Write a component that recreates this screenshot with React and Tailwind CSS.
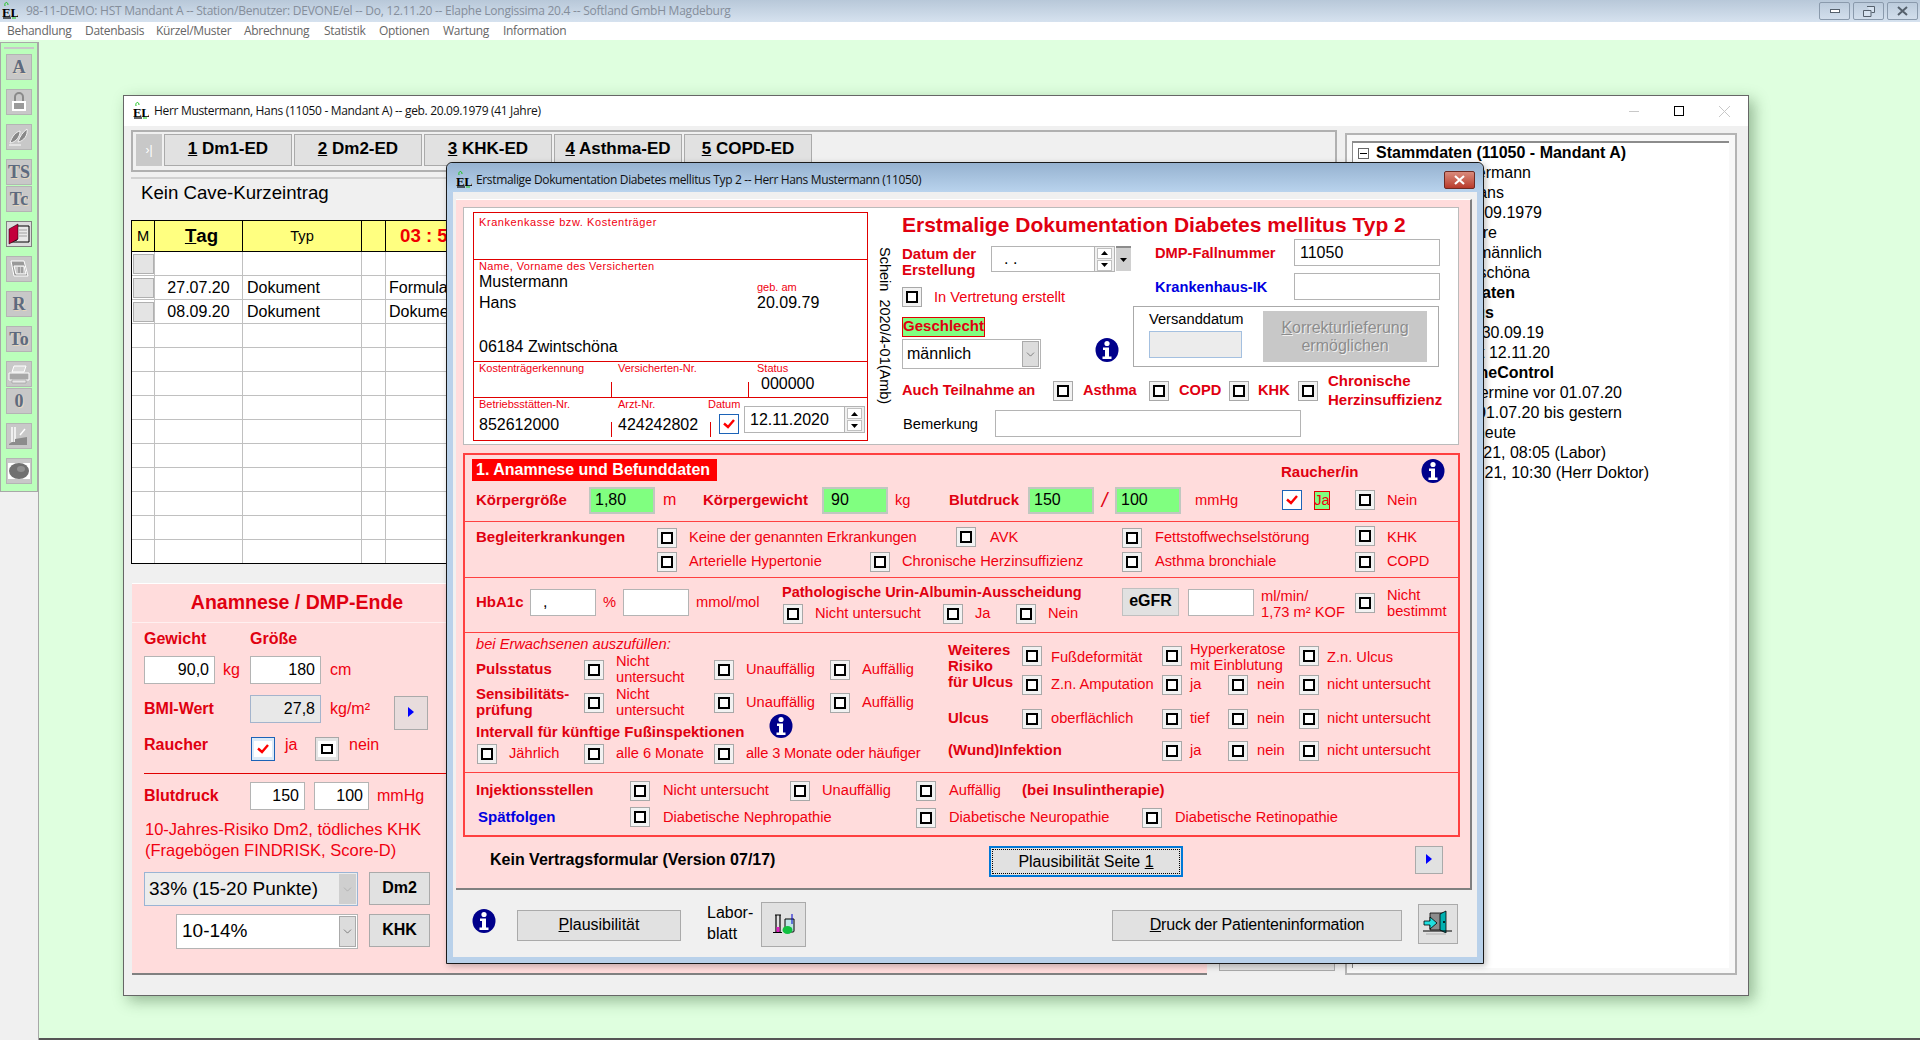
import React from "react";
import { ChevronDown } from "lucide-react";

const Logo = () => (
  <svg width="16" height="20" viewBox="0 0 16 20" className="shrink-0">
    <path d="M3 5 C2 1 6 0 6 4" fill="none" stroke="#19c419" strokeWidth="1" />
    <text x="0" y="15.5" fontSize="13" fontWeight="700" fontFamily="Liberation Serif" fill="#000">EL</text>
    <path d="M1 17H9" stroke="#000" strokeWidth="1.2" />
    <path d="M10 17H14" stroke="#19c419" strokeWidth="1" />
  </svg>
);

const Info = ({ className = "" }) => (
  <svg width="24" height="24" viewBox="0 0 24 24" className={`shrink-0 ${className}`}>
    <ellipse cx="12" cy="12" rx="11.5" ry="12" fill="#00008b" />
    <circle cx="12" cy="5.5" r="2.6" fill="#fff" />
    <path d="M8 9.5h6v9h2.5v2.5h-9v-2.5H10v-6.5H8z" fill="#fff" />
  </svg>
);

const Arrow = () => (
  <svg width="8" height="12" viewBox="0 0 8 12">
    <path d="M1 1l6 5-6 5z" fill="#0000ff" />
  </svg>
);

const Check = () => (
  <svg width="14" height="12" viewBox="0 0 14 12">
    <path d="M2 5.5l4 3.5 6-7" fill="none" stroke="#ff0000" strokeWidth="2.4" />
  </svg>
);

// the small framed box with the black square, used everywhere in the form
const Cb = ({ checked }) =>
  checked ? (
    <span className="flex h-5 w-5 shrink-0 items-center justify-center border border-[#1c63b7] bg-white">
      <Check />
    </span>
  ) : (
    <span className="flex h-5 w-5 shrink-0 items-center justify-center border border-[#a8a8a8] bg-[#f2f2f2]">
      <span className="h-3 w-3 border-2 border-black bg-white" />
    </span>
  );

const Opt = ({ className = "", gap = "gap-3", cb = "", checked, children }) => (
  <div className={`flex shrink-0 items-center ${gap} ${className}`}>
    <span className={`flex shrink-0 ${cb}`}>
      <Cb checked={checked} />
    </span>
    <span className="lbl whitespace-nowrap text-[14.67px] leading-4 text-[#f00010]">{children}</span>
  </div>
);

const B = ({ className = "", color = "text-[#e00010]", size = "text-[15px]", children }) => (
  <span className={`lbl shrink-0 whitespace-nowrap font-bold leading-4 ${size} ${color} ${className}`}>{children}</span>
);

const T = ({ className = "", children }) => (
  <span className={`lbl shrink-0 whitespace-nowrap text-[14.67px] leading-4 text-[#f00010] ${className}`}>{children}</span>
);

const Field = ({ className = "", children }) => (
  <div className={`flex shrink-0 items-center border border-[#b4b4b4] bg-white text-[16px] text-black ${className}`}>{children}</div>
);

const GreenField = ({ className = "", children }) => (
  <div className={`flex h-[27px] w-[66px] shrink-0 items-center border-2 border-[#c0c8c0] bg-[#80ff80] text-[16px] text-black ${className}`}>{children}</div>
);

const Btn = ({ className = "", children }) => (
  <div className={`flex shrink-0 items-center justify-center border border-[#aaaaaa] bg-[#e1e1e1] pb-[2px] text-black ${className}`}>{children}</div>
);

const Spin = () => (
  <div className="flex h-full w-[20px] shrink-0 flex-col items-center justify-center gap-px border-l border-[#b4b4b4] bg-[#f0f0f0]">
    <span className="flex h-[11px] w-[15px] items-center justify-center border border-[#c0c0c0] bg-white">
      <svg width="7" height="4" viewBox="0 0 7 4"><path d="M3.5 0L7 4H0z" fill="#000" /></svg>
    </span>
    <span className="flex h-[11px] w-[15px] items-center justify-center border border-[#c0c0c0] bg-white">
      <svg width="7" height="4" viewBox="0 0 7 4"><path d="M0 0h7L3.5 4z" fill="#000" /></svg>
    </span>
  </div>
);

const Caret = ({ className = "" }) => (
  <span className={`flex shrink-0 items-center justify-center border border-[#aaaaaa] bg-[#dcdcdc] ${className}`}>
    <ChevronDown size={13} strokeWidth={1} color="#333" />
  </span>
);

const Tick = ({ className = "" }) => <span className={`h-[15px] w-px shrink-0 bg-[#e00000] ${className}`} />;

const Small = ({ className = "", children }) => (
  <div className={`h-[14px] shrink-0 whitespace-nowrap text-[11px] leading-[12px] text-[#f00010] ${className}`}>{children}</div>
);

const ToolBtn = ({ children, active }) => (
  <div
    className={`flex h-[26px] w-[26px] items-center justify-center border font-['Liberation_Serif',serif] text-[18px] font-bold text-[#5d6a80] [text-shadow:1px_1px_0_#e6d6bc] ${
      active ? "border-[#808080] bg-[#dcdcdc]" : "border-[#b4b4b4] bg-[#c8c8c8]"
    }`}
  >
    {children}
  </div>
);

const tabs = [
  ["1", " Dm1-ED"],
  ["2", " Dm2-ED"],
  ["3", " KHK-ED"],
  ["4", " Asthma-ED"],
  ["5", " COPD-ED"],
];

const rows = [
  { box: true },
  { box: true, tag: "27.07.20", typ: "Dokument", rest: "Formular" },
  { box: true, tag: "08.09.20", typ: "Dokument", rest: "Dokument" },
  {}, {}, {}, {}, {}, {}, {}, {}, {}, {},
];

// right edge of each tree line is what shows beside the dialog
const tree = [
  { w: "w-[178px]", text: "Name: Mustermann" },
  { w: "w-[151px]", text: "Vorname: Hans" },
  { w: "w-[189px]", text: "geb. 20.09.1979" },
  { w: "w-[144px]", text: "41 Jahre" },
  { w: "w-[189px]", text: "Sex: männlich" },
  { w: "w-[177px]", text: "06184 Zwintschöna" },
  { w: "w-[162px]", text: "Scheindaten", bold: true },
  { w: "w-[141px]", text: "Status", bold: true },
  { w: "w-[191px]", text: "DMP 30.09.19" },
  { w: "w-[197px]", text: "zuletzt 12.11.20" },
  { w: "w-[201px]", text: "OnlineControl", bold: true },
  { w: "w-[269px]", text: "Termine vor 01.07.20" },
  { w: "w-[269px]", text: "ab 01.07.20 bis gestern" },
  { w: "w-[163px]", text: "heute" },
  { w: "w-[253px]", text: "01.21, 08:05 (Labor)" },
  { w: "w-[296px]", text: "01.21, 10:30 (Herr Doktor)" },
];

const MainWindow = () => (
  <div className="absolute left-[123px] top-[55px] h-[901px] w-[1626px] border border-[#666666] bg-[#f0f0f0] shadow-[5px_5px_14px_rgba(40,80,40,0.4)]">
    <div className="flex h-[30px] items-center bg-white pl-[9px] pr-[18px] font-['Open_Sans',sans-serif] text-[12px] tracking-[-0.32px] text-[#111]">
      <Logo />
      <span className="ml-[5px]">Herr Mustermann, Hans (11050 - Mandant A) -- geb. 20.09.1979 (41 Jahre)</span>
      <div className="ml-auto flex items-center gap-[35px]">
        <span className="h-px w-[10px] bg-[#c8c8c8]" />
        <span className="h-[10px] w-[10px] border border-black" />
        <svg width="11" height="11" viewBox="0 0 11 11"><path d="M0 0l11 11M11 0L0 11" stroke="#c8c8c8" /></svg>
      </div>
    </div>

    <div className="flex h-[869px] pl-[7px]">
      <div className="w-[1206px] shrink-0">
        <div className="mt-[4px] flex h-[42px] items-start gap-[2px] border-2 border-[#b0b0b0] pl-[3px] pt-[2px]">
          <div className="flex h-[32px] w-[26px] items-center justify-center bg-[#c8c8c8] text-[12px] text-white">›|</div>
          {tabs.map(([n, label]) => (
            <Btn key={n} className="h-[32px] w-[128px] text-[17px] font-bold">
              <span className="underline">{n}</span>
              <span className="whitespace-pre">{label}</span>
            </Btn>
          ))}
        </div>
        <div className="mt-[5px] flex h-[43px] items-center border-t-2 border-[#d0d0d0] pb-[14px] pl-[10px] text-[18.67px] text-black">
          Kein Cave-Kurzeintrag
        </div>

        {/* table behind the dialog */}
        <div className="h-[344px] overflow-hidden border border-black bg-white">
          <div className="grid h-[31px] grid-cols-[23px_88px_119px_24px_1fr] border-b border-black bg-[#ffff80] text-center">
            <div className="flex items-center justify-center border-r border-black text-[14.67px]">M</div>
            <div className="flex items-center justify-center border-r border-black pl-[6px] text-[18.67px] font-bold">
              <span className="underline">T</span>ag
            </div>
            <div className="flex items-center justify-center border-r border-black text-[14.67px]">Typ</div>
            <div className="border-r border-black" />
            <div className="flex items-center pl-[14px] text-[18.67px] font-bold text-[#f00000]">03 : 58</div>
          </div>
          {rows.map((r, i) => (
            <div key={i} className="grid h-[24px] grid-cols-[23px_88px_119px_24px_1fr] border-b border-[#c0c0c0] text-[16px] text-black">
              <div className="flex items-center border-r border-[#c0c0c0] pl-px">
                {r.box && <span className="h-[20px] w-[21px] border border-[#b0b0b0] bg-[#e4e4e4]" />}
              </div>
              <div className="flex items-center justify-center border-r border-[#c0c0c0]">{r.tag}</div>
              <div className="flex items-center border-r border-[#c0c0c0] pl-[4px]">{r.typ}</div>
              <div className="border-r border-[#c0c0c0]" />
              <div className="flex items-center pl-[3px]">{r.rest}</div>
            </div>
          ))}
        </div>

        <div className="ml-px mt-[19px] flex">
          <div className="h-[392px] w-[1075px] shrink-0 border-b-2 border-t border-b-[#808080] border-t-white bg-[#ffdcdc] pl-[12px]">
            <div className="-ml-[12px] flex h-[39px] w-[1075px] items-center border-b border-[#fff0f0]">
              <div className="w-[330px] text-center text-[19.5px] font-bold text-[#e00010]">Anamnese / DMP-Ende</div>
            </div>
            <div className="mt-[8px] flex h-[16px] text-[16px] font-bold leading-4 text-[#e00010]">
              <span className="w-[106px]">Gewicht</span>
              <span>Größe</span>
            </div>
            <div className="mt-[9px] flex items-center text-[16px] text-[#f00010]">
              <Field className="h-[28px] w-[71px] justify-end pr-[5px]">90,0</Field>
              <span className="ml-[8px] w-[27px]">kg</span>
              <Field className="h-[28px] w-[71px] justify-end pr-[5px]">180</Field>
              <span className="ml-[9px]">cm</span>
            </div>
            <div className="mt-[11px] flex items-start text-[16px] text-[#f00010]">
              <span className="mt-[2px] w-[106px] font-bold text-[#e00010]">BMI-Wert</span>
              <div className="flex h-[28px] w-[71px] items-center justify-end border border-[#a4b4cc] bg-[#e8e8e8] pr-[5px] text-black">27,8</div>
              <span className="ml-[9px] mt-[2px] w-[64px]">kg/m²</span>
              <Btn className="mt-px h-[34px] w-[34px] bg-[#e8dcdc]"><Arrow /></Btn>
            </div>
            <div className="mt-[7px] flex h-[24px] items-center text-[16px] leading-4 text-[#f00010]">
              <span className="mb-[8px] w-[107px] font-bold text-[#e00010]">Raucher</span>
              <span className="flex h-[24px] w-[24px] items-center justify-center border border-[#1c63b7] bg-[#dcebf8]">
                <span className="flex h-[16px] w-[18px] items-center justify-center bg-white"><Check /></span>
              </span>
              <span className="mb-[8px] ml-[10px] w-[30px]">ja</span>
              <span className="flex h-[24px] w-[24px] items-center justify-center border border-[#a8a8a8] bg-[#e4e4e4]">
                <span className="flex h-[16px] w-[18px] items-center justify-center bg-white">
                  <span className="h-[10px] w-[12px] border-2 border-black" />
                </span>
              </span>
              <span className="mb-[8px] ml-[10px]">nein</span>
            </div>
            <div className="mt-[12px] h-px bg-[#e00000]" />
            <div className="mt-[8px] flex items-center text-[16px] text-[#f00010]">
              <span className="w-[106px] font-bold text-[#e00010]">Blutdruck</span>
              <Field className="h-[28px] w-[55px] justify-end pr-[5px]">150</Field>
              <Field className="ml-[9px] h-[28px] w-[55px] justify-end pr-[5px]">100</Field>
              <span className="ml-[8px]">mmHg</span>
            </div>
            <div className="ml-px mt-[9px] text-[16.5px] leading-[21px] text-[#f00010]">
              10-Jahres-Risiko Dm2, tödliches KHK
              <br />
              (Fragebögen FINDRISK, Score-D)
            </div>
            <div className="mt-[11px] flex items-start">
              <div className="flex h-[34px] w-[214px] items-center border border-[#9ab4d4] bg-[#ececec] pl-[4px] text-[19px] text-black">
                33% (15-20 Punkte)
                <span className="ml-auto mr-px flex h-[30px] w-[17px] items-center justify-center bg-[#cfcfcf]">
                  <ChevronDown size={13} strokeWidth={1} color="#999" />
                </span>
              </div>
              <Btn className="ml-[11px] h-[33px] w-[61px] text-[16px] font-bold">Dm2</Btn>
            </div>
            <div className="ml-[32px] mt-[8px] flex items-start">
              <div className="flex h-[35px] w-[182px] items-center border border-[#b4b4b4] bg-white pl-[5px] text-[19px] text-black">
                10-14%
                <Caret className="ml-auto mr-px h-[31px] w-[17px]" />
              </div>
              <Btn className="ml-[11px] h-[33px] w-[61px] text-[16px] font-bold">KHK</Btn>
            </div>
          </div>
          <div className="ml-[12px] mt-auto mb-[4px] h-[30px] w-[116px] border border-[#aaaaaa] bg-[#e1e1e1]" />
        </div>
      </div>

      {/* tree on the right */}
      <div className="ml-[8px] mt-[7px] h-[842px] w-[392px] shrink-0 border-2 border-[#b4b4b4] bg-[#f8f8f8] px-[5px] pt-[6px]">
        <div className="h-[827px] w-[377px] border-t-2 border-l border-[#8c8c8c] bg-white">
          <div className="flex h-[20px] items-center pl-[5px] text-[16px] font-bold text-black">
            <span className="flex h-[11px] w-[11px] shrink-0 items-center justify-center border border-[#666]">
              <span className="h-px w-[7px] bg-black" />
            </span>
            <span className="ml-[7px] whitespace-nowrap">Stammdaten (11050 - Mandant A)</span>
          </div>
          {tree.map((l) => (
            <div key={l.text} className={`flex h-[20px] items-center justify-end whitespace-nowrap text-[16px] text-black ${l.w} ${l.bold ? "font-bold" : ""}`}>
              {l.text}
            </div>
          ))}
        </div>
      </div>
    </div>
  </div>
);

const ScheinBox = () => (
  <div className="h-[229px] w-[395px] shrink-0 border border-[#e00000] text-[16px] leading-4 text-black">
    <div className="h-[47px] border-b border-[#e00000] pl-[5px] pt-[3px]">
      <Small className="tracking-[0.57px]">Krankenkasse bzw. Kostenträger</Small>
    </div>
    <div className="flex h-[102px] border-b border-[#e00000] pl-[5px]">
      <div className="w-[278px] shrink-0">
        <Small className="tracking-[0.37px]">Name, Vorname des Versicherten</Small>
        <div>Mustermann</div>
        <div className="mt-[5px]">Hans</div>
        <div className="mt-[28px]">06184 Zwintschöna</div>
      </div>
      <div className="pt-[21px]">
        <Small>geb. am</Small>
        <div>20.09.79</div>
      </div>
    </div>
    <div className="flex h-[36px] border-b border-[#e00000] pl-[5px]">
      <div className="w-[139px] shrink-0">
        <Small>Kostenträgerkennung</Small>
        <Tick className="ml-[132px] mt-[6px] block" />
      </div>
      <div className="w-[139px] shrink-0">
        <Small>Versicherten-Nr.</Small>
        <Tick className="ml-[130px] mt-[6px] block" />
      </div>
      <div>
        <Small>Status</Small>
        <div className="pl-[4px]">000000</div>
      </div>
    </div>
    <div className="pl-[5px]">
      <div className="flex">
        <Small className="w-[139px]">Betriebsstätten-Nr.</Small>
        <Small className="w-[90px]">Arzt-Nr.</Small>
        <Small>Datum</Small>
      </div>
      <div className="flex h-[28px] items-start">
        <span className="mt-[5px] w-[132px] shrink-0">852612000</span>
        <Tick className="mt-[10px]" />
        <span className="ml-[6px] mt-[5px] w-[92px] shrink-0">424242802</span>
        <Tick className="mt-[10px]" />
        <span className="ml-[8px] mt-[2px]"><Cb checked /></span>
        <Field className="-mt-[6px] ml-[5px] h-[27px] w-[121px] pl-[5px]">
          12.11.2020
          <span className="ml-auto flex h-full"><Spin /></span>
        </Field>
      </div>
    </div>
  </div>
);

const FormHead = () => (
  <div className="w-[557px] shrink-0">
    <div className="flex h-[26px] items-center whitespace-nowrap text-[21px] font-bold text-[#e00010]">
      Erstmalige Dokumentation Diabetes mellitus Typ 2
    </div>
    <div className="flex h-[130px]">
      <div className="w-[231px] shrink-0 pt-[8px]">
        <div className="flex items-start">
          <B className="w-[89px]">Datum der<br />Erstellung</B>
          <Field className="h-[26px] w-[124px] pl-[12px] text-[12px]">
            . .
            <span className="ml-auto flex h-full"><Spin /></span>
          </Field>
          <span className="ml-px flex h-[25px] w-[15px] items-center justify-center border-t-2 border-[#8c8c8c] bg-[#d0d0d0]">
            <svg width="7" height="4" viewBox="0 0 7 4"><path d="M0 0h7L3.5 4z" fill="#000" /></svg>
          </span>
        </div>
        <div className="mt-[9px] flex items-center gap-3">
          <Cb />
          <T>In Vertretung erstellt</T>
        </div>
        <div className="mt-[10px] flex h-[20px] w-[83px] items-center justify-center border border-[#e00000] bg-[#80ff80] pb-[2px]">
          <B>Geschlecht</B>
        </div>
        <div className="mt-[2px] flex items-start">
          <Field className="h-[30px] w-[139px] pl-[4px]">
            männlich
            <Caret className="ml-auto mr-px h-[26px] w-[17px]" />
          </Field>
          <Info className="-mt-px ml-[54px]" />
        </div>
      </div>
      <div className="w-[306px] shrink-0 pt-px">
        <div className="flex items-center">
          <B className="w-[161px] pl-[22px]" size="text-[14.67px]">DMP-Fallnummer</B>
          <Field className="h-[27px] w-[146px] pl-[5px]">11050</Field>
        </div>
        <div className="mt-[7px] flex items-center">
          <B className="w-[161px] pl-[22px]" size="text-[14.67px]" color="text-[#0000e0]">Krankenhaus-IK</B>
          <Field className="h-[27px] w-[146px]" />
        </div>
        <div className="mt-[6px] flex h-[61px] w-[306px] border border-[#aaaaaa] pl-[15px] pt-[4px]">
          <div className="w-[114px] shrink-0">
            <div className="h-[16px] text-[14.67px] leading-4 text-black">Versanddatum</div>
            <div className="mt-[4px] h-[27px] w-[93px] border border-[#a4c0e0] bg-[#ececec]" />
          </div>
          <div className="flex h-[51px] w-[164px] flex-col items-center justify-center bg-[#c8c8c8] text-[16px] leading-[18px] text-[#8c8c8c] [text-shadow:1px_1px_0_#f0f0f0]">
            <span><span className="underline">K</span>orrekturlieferung</span>
            <span>ermöglichen</span>
          </div>
        </div>
      </div>
    </div>
    <div className="mt-[4px] flex h-[38px] items-center [&_.lbl]:pb-[2px]">
      <B className="w-[151px]" size="text-[14.67px]">Auch Teilnahme an</B>
      <div className="flex w-[96px] shrink-0 items-center gap-[10px]"><Cb /><B size="text-[14.67px]">Asthma</B></div>
      <div className="flex w-[80px] shrink-0 items-center gap-[10px]"><Cb /><B size="text-[14.67px]">COPD</B></div>
      <div className="flex w-[69px] shrink-0 items-center gap-[9px]"><Cb /><B size="text-[14.67px]">KHK</B></div>
      <div className="flex items-center gap-[10px]">
        <Cb />
        <B className="leading-[19px]">Chronische<br />Herzinsuffizienz</B>
      </div>
    </div>
    <div className="flex items-center">
      <span className="w-[93px] pl-px text-[14.67px] text-black">Bemerkung</span>
      <Field className="h-[27px] w-[306px]" />
    </div>
  </div>
);

const Section = () => (
  <div className="h-[384px] w-[997px] border-2 border-[#ff4040]">
    {/* Raucher + Groesse, Gewicht, Blutdruck */}
    <div className="h-[66px]">
      <div className="flex h-[28px] items-start pl-[7px] pt-[4px]">
        <div className="flex h-[22px] w-[245px] shrink-0 items-center bg-[#ff0000] pl-[4px] text-[16px] font-bold text-white">
          1. Anamnese und Befunddaten
        </div>
        <B className="ml-[564px] mt-[5px] w-[140px]">Raucher/in</B>
        <Info />
      </div>
      <div className="mt-[2px] flex h-[30px] items-center pl-[11px]">
        <B className="w-[113px]">Körpergröße</B>
        <GreenField className="pl-[4px]">1,80</GreenField>
        <T className="ml-[8px] w-[40px] text-[16px]">m</T>
        <B className="w-[119px]">Körpergewicht</B>
        <GreenField className="pl-[7px]">90</GreenField>
        <T className="ml-[7px] w-[54px]">kg</T>
        <B className="w-[79px]">Blutdruck</B>
        <GreenField className="pl-[4px]">150</GreenField>
        <span className="w-[21px] shrink-0 text-center text-[20px] italic text-[#e00010]">/</span>
        <GreenField className="pl-[4px]">100</GreenField>
        <T className="ml-[14px] w-[87px]">mmHg</T>
        <Cb checked />
        <span className="ml-[12px] flex h-[19px] w-[16px] items-center justify-center border border-[#e00000] bg-[#80ff80] text-[14.67px] text-[#f00010]">Ja</span>
        <Opt className="ml-[25px]">Nein</Opt>
      </div>
    </div>

    {/* Begleiterkrankungen */}
    <div className="h-[56px] border-t border-[#ff4040] pl-[11px] pt-[6px] [&_.lbl]:pb-[2px]">
      <div className="flex h-[20px] items-center">
        <B className="w-[181px]">Begleiterkrankungen</B>
        <Opt className="w-[299px] tracking-[-0.12px]">Keine der genannten Erkrankungen</Opt>
        <Opt className="w-[166px]" gap="gap-[14px]" cb="mb-[2px]">AVK</Opt>
        <Opt className="w-[233px]" gap="gap-[13px]">Fettstoffwechselstörung</Opt>
        <Opt cb="mb-[4px]">KHK</Opt>
      </div>
      <div className="ml-[181px] mt-[4px] flex h-[20px] items-center">
        <Opt className="w-[213px]">Arterielle Hypertonie</Opt>
        <Opt className="w-[252px]">Chronische Herzinsuffizienz</Opt>
        <Opt className="w-[233px]" gap="gap-[13px]">Asthma bronchiale</Opt>
        <Opt>COPD</Opt>
      </div>
    </div>

    {/* HbA1c */}
    <div className="flex h-[55px] items-center border-t border-[#ff4040] pb-[6px] pl-[11px]">
      <B className="w-[54px]">HbA1c</B>
      <Field className="h-[27px] w-[66px] pl-[12px] text-[12px]">,</Field>
      <T className="ml-[7px] w-[20px]">%</T>
      <Field className="h-[27px] w-[66px]" />
      <T className="ml-[7px] w-[86px]">mmol/mol</T>
      <div className="mt-[4px] w-[340px] shrink-0">
        <B className="block h-[16px]" size="text-[14.5px]">Pathologische Urin-Albumin-Ausscheidung</B>
        <div className="ml-px mt-[4px] flex h-[20px] items-center [&_.lbl]:pb-[2px]">
          <Opt className="w-[160px]">Nicht untersucht</Opt>
          <Opt className="w-[73px]">Ja</Opt>
          <Opt>Nein</Opt>
        </div>
      </div>
      <Btn className="h-[28px] w-[57px] border-[#c0c0c0] text-[16px] font-bold text-[#e00010]">eGFR</Btn>
      <Field className="ml-[9px] h-[27px] w-[66px]" />
      <T className="ml-[7px] mt-[4px] w-[94px]">ml/min/<br />1,73 m² KOF</T>
      <Opt className="mt-[2px]">Nicht<br />bestimmt</Opt>
    </div>

    {/* Fuss */}
    <div className="flex h-[140px] border-t border-[#ff4040] pl-[11px] [&_.lbl]:pb-[2px]">
      <div className="w-[472px] shrink-0 pt-px">
        <T className="block h-[20px] italic leading-5">bei Erwachsenen auszufüllen:</T>
        <div className="flex h-[32px] items-center">
          <B className="w-[108px]">Pulsstatus</B>
          <Opt className="w-[130px]">Nicht<br />untersucht</Opt>
          <Opt className="w-[116px]">Unauffällig</Opt>
          <Opt>Auffällig</Opt>
        </div>
        <div className="mt-px flex h-[32px] items-center">
          <B className="w-[108px]">Sensibilitäts-<br />prüfung</B>
          <Opt className="w-[130px]">Nicht<br />untersucht</Opt>
          <Opt className="w-[116px]">Unauffällig</Opt>
          <Opt>Auffällig</Opt>
        </div>
        <div className="mt-[4px] flex h-[20px] items-center">
          <B className="w-[293px]">Intervall für künftige Fußinspektionen</B>
          <Info className="mb-[14px]" />
        </div>
        <div className="ml-px mt-px flex h-[20px] items-center">
          <Opt className="w-[107px]">Jährlich</Opt>
          <Opt className="w-[130px]">alle 6 Monate</Opt>
          <Opt className="tracking-[-0.15px]">alle 3 Monate oder häufiger</Opt>
        </div>
      </div>
      <div className="pt-[9px]">
        <div className="flex items-start">
          <B className="w-[74px]">Weiteres<br />Risiko<br />für Ulcus</B>
          <div>
            <div className="flex h-[32px] items-center">
              <Opt className="w-[140px]" gap="gap-[9px]" cb="mb-[4px]">Fußdeformität</Opt>
              <Opt className="w-[137px]" gap="gap-2" cb="mb-[4px]">Hyperkeratose<br />mit Einblutung</Opt>
              <Opt gap="gap-2" cb="mb-[4px]">Z.n. Ulcus</Opt>
            </div>
            <div className="mt-px flex h-[20px] items-center">
              <Opt className="w-[140px]" gap="gap-[9px]">Z.n. Amputation</Opt>
              <Opt className="w-[66px]" gap="gap-2">ja</Opt>
              <Opt className="w-[71px]" gap="gap-[9px]">nein</Opt>
              <Opt gap="gap-2">nicht untersucht</Opt>
            </div>
          </div>
        </div>
        <div className="mt-[14px] flex h-[20px] items-center">
          <B className="w-[74px]">Ulcus</B>
          <Opt className="w-[140px]" gap="gap-[9px]">oberflächlich</Opt>
          <Opt className="w-[66px]" gap="gap-2">tief</Opt>
          <Opt className="w-[71px]" gap="gap-[9px]">nein</Opt>
          <Opt gap="gap-2">nicht untersucht</Opt>
        </div>
        <div className="mt-[12px] flex h-[20px] items-center">
          <B className="w-[214px]">(Wund)Infektion</B>
          <Opt className="w-[66px]" gap="gap-2">ja</Opt>
          <Opt className="w-[71px]" gap="gap-[9px]">nein</Opt>
          <Opt gap="gap-2">nicht untersucht</Opt>
        </div>
      </div>
    </div>

    {/* Injektionsstellen, Spaetfolgen */}
    <div className="border-t border-[#ff4040] pl-[11px] pt-[8px] [&_.lbl]:pb-[2px]">
      <div className="flex h-[20px] items-center">
        <B className="w-[154px]">Injektionsstellen</B>
        <Opt className="w-[160px]" gap="gap-[13px]">Nicht untersucht</Opt>
        <Opt className="w-[126px]">Unauffällig</Opt>
        <Opt className="w-[106px]" gap="gap-[13px]">Auffällig</Opt>
        <B>(bei Insulintherapie)</B>
      </div>
      <div className="mt-[7px] flex h-[20px] items-center">
        <B className="ml-[2px] w-[152px]" color="text-[#0000e0]">Spätfolgen</B>
        <Opt className="w-[286px]" gap="gap-[13px]" cb="mb-[2px]">Diabetische Nephropathie</Opt>
        <Opt className="w-[226px]" gap="gap-[13px]">Diabetische Neuropathie</Opt>
        <Opt gap="gap-[13px]">Diabetische Retinopathie</Opt>
      </div>
    </div>
  </div>
);

const Dialog = () => (
  <div className="absolute left-[446px] top-[122px] h-[802px] w-[1038px] rounded-t-[6px] border border-[#1a1a1a] bg-[#b9d1ea] shadow-[2px_2px_6px_rgba(0,0,0,0.25)]">
    <div className="flex h-[29px] items-center rounded-t-[6px] bg-gradient-to-b from-[#96b2d0] to-[#b9d3ed] pl-[9px] pr-[8px] pt-[5px] font-['Open_Sans',sans-serif] text-[12px] tracking-[-0.35px] text-[#111]">
      <Logo />
      <span className="ml-[4px]">Erstmalige Dokumentation Diabetes mellitus Typ 2 -- Herr Hans Mustermann (11050)</span>
      <span className="ml-auto flex h-[18px] w-[31px] items-center justify-center rounded-[2px] border border-[#6e2a22] bg-gradient-to-b from-[#d88a7c] to-[#b8392a]">
        <svg width="11" height="10" viewBox="0 0 11 10"><path d="M1 1l9 8M10 1L1 9" stroke="#fff" strokeWidth="2.2" /></svg>
      </span>
    </div>

    <div className="ml-[6px] h-[765px] w-[1024px] bg-[#f0f0f0] pl-[3px] pt-[7px]">
      <div className="h-[691px] w-[1016px] border-b-2 border-r-2 border-t border-b-[#808080] border-r-[#808080] border-t-white bg-[#ffdcdc] pl-[7px] pt-[7px]">
        <div className="flex h-[238px] w-[996px] border border-[#bbbbbb] bg-white pl-[9px] pt-[4px]">
          <ScheinBox />
          <div className="flex w-[34px] shrink-0 flex-col items-center pr-[1px] pt-[35px]">
            <span className="whitespace-pre text-[14.5px] leading-4 text-black [writing-mode:vertical-rl]">Schein  2020/4-01(Amb)</span>
          </div>
          <FormHead />
        </div>
        <div className="mt-[8px]">
          <Section />
        </div>
        <div className="flex h-[51px] items-start">
          <div className="ml-[27px] mt-[15px] w-[499px] shrink-0 text-[16px] font-bold leading-4 text-black">Kein Vertragsformular (Version 07/17)</div>
          <div className="mt-[9px] flex h-[31px] w-[194px] shrink-0 border-2 border-[#0078d7] bg-[#e1e1e1] p-px">
            <div className="flex flex-1 items-center justify-center border border-dotted border-black text-[16px]">
              Plausibilität Seite&nbsp;<span className="underline">1</span>
            </div>
          </div>
          <Btn className="ml-[232px] mt-[9px] h-[28px] w-[28px]"><Arrow /></Btn>
        </div>
      </div>

      <div className="-ml-[3px] flex h-[67px] items-start">
        <Info className="ml-[19px] mt-[19px]" />
        <Btn className="ml-[21px] mt-[20px] h-[31px] w-[164px] text-[16px]"><span className="underline">P</span>lausibilität</Btn>
        <div className="ml-[26px] mt-[12px] w-[54px] shrink-0 text-[16px] leading-[21px] text-black">Labor-<br />blatt</div>
        <Btn className="mt-[12px] h-[45px] w-[45px]">
          <svg width="24" height="22" viewBox="0 0 24 22">
            <path d="M3 2h6M4 2v17h4V2" fill="none" stroke="#000" strokeWidth="1.2" />
            <rect x="4.5" y="14" width="3" height="5" fill="#e020c0" />
            <path d="M1 19.5h9" stroke="#000" />
            <path d="M13 6h9v12a1 1 0 0 1-1 1h-7a1 1 0 0 1-1-1z" fill="#bfe6e6" stroke="#000" />
            <path d="M20 1v10" stroke="#0000d0" />
            <ellipse cx="15.5" cy="17" rx="5" ry="4" fill="#10c040" />
          </svg>
        </Btn>
        <Btn className="ml-[306px] mt-[20px] h-[31px] w-[290px] text-[16px] tracking-[-0.2px]"><span className="underline">D</span>ruck der Patienteninformation</Btn>
        <Btn className="ml-[16px] mt-[14px] h-[40px] w-[40px]">
          <svg width="30" height="30" viewBox="0 0 30 30">
            <path d="M7 5h14v17H7z" fill="#8c8c8c" stroke="#000" strokeWidth="0.8" />
            <path d="M17 6l6-3v22l-6-3z" fill="#00b0b0" stroke="#000" strokeWidth="0.8" />
            <circle cx="21" cy="14" r="1" fill="#000" />
            <path d="M1 13h6V9l7 6-7 6v-4H1z" fill="#20e0e0" stroke="#000" strokeWidth="0.8" />
            <path d="M0 23h29" stroke="#000" />
            <path d="M3 26h20" stroke="#c8c8c8" strokeWidth="2" />
          </svg>
        </Btn>
      </div>
    </div>
  </div>
);

const Toolbar = () => (
  <div className="mt-[2px] h-[450px] w-[38px] border border-[#a8a8a8] bg-[#bbffbb] pt-[4px]">
    <div className="mx-[3px] h-[2px] bg-[#c8c8c8]" />
    <div className="ml-[5px] mt-[5px] flex flex-col gap-[9px]">
      <ToolBtn>A</ToolBtn>
      <ToolBtn>
        <svg width="18" height="20" viewBox="0 0 18 20">
          <path d="M5 9V5a4 4 0 0 1 8 0v4" fill="none" stroke="#8a8a8a" strokeWidth="2" />
          <rect x="2" y="9" width="14" height="10" fill="#fff" />
          <rect x="4" y="11" width="10" height="6" fill="#9a9a9a" />
        </svg>
      </ToolBtn>
      <ToolBtn>
        <svg width="22" height="20" viewBox="0 0 22 20">
          <path d="M2 16c2-7 6-11 10-12 0 6-4 11-10 12zM10 15c2-6 5-10 9-13 1 6-3 12-9 13z" fill="#888" stroke="#fff" strokeWidth="0.8" />
          <path d="M1 18h12" stroke="#fff" />
        </svg>
      </ToolBtn>
      <div className="flex flex-col gap-px">
        <ToolBtn>TS</ToolBtn>
        <ToolBtn>Tc</ToolBtn>
      </div>
      <ToolBtn active>
        <svg width="22" height="22" viewBox="0 0 22 22">
          <path d="M9 3h12v16H2l7-2z" fill="#e8e8e8" stroke="#000" />
          <path d="M11 7h8M11 10h8M11 13h8" stroke="#a0a0a0" />
          <path d="M1 6l9-5v15l-9 5z" fill="#c4003c" stroke="#000" strokeWidth="0.5" />
        </svg>
      </ToolBtn>
      <ToolBtn>
        <svg width="22" height="20" viewBox="0 0 22 20">
          <path d="M3 2h13l4 15H6z" fill="#999" stroke="#fff" />
          <path d="M6 7h10l2 8H8z" fill="#c8c8c8" stroke="#fff" />
          <path d="M11 8v6M14 8v6" stroke="#777" />
        </svg>
      </ToolBtn>
      <ToolBtn>R</ToolBtn>
      <ToolBtn>To</ToolBtn>
      <div className="flex flex-col gap-px">
        <ToolBtn>
          <svg width="24" height="20" viewBox="0 0 24 20">
            <path d="M7 2h12l-2 6H5z" fill="#d8d8d8" stroke="#fff" />
            <path d="M2 9h20v7H2z" fill="#a8a8a8" stroke="#fff" />
            <path d="M5 16h14v3H5z" fill="#e8e8e8" stroke="#888" strokeWidth="0.5" />
          </svg>
        </ToolBtn>
        <ToolBtn>0</ToolBtn>
      </div>
      <ToolBtn>
        <svg width="24" height="22" viewBox="0 0 24 22">
          <path d="M5 2v15M8 2v15" stroke="#fff" strokeWidth="1.4" />
          <path d="M2 19l3-2h3v-3l12-2v8H2z" fill="#8c8c8c" />
          <path d="M13 10l5-6" stroke="#fff" strokeWidth="1.4" />
        </svg>
      </ToolBtn>
      <ToolBtn>
        <svg width="24" height="20" viewBox="0 0 24 20">
          <rect x="1" y="2" width="22" height="16" fill="#fff" />
          <ellipse cx="12" cy="10" rx="10" ry="8" fill="#707070" />
          <ellipse cx="14" cy="8" rx="4" ry="3" fill="#909090" />
        </svg>
      </ToolBtn>
    </div>
  </div>
);

const App = () => (
  <div className="relative flex h-[1040px] w-[1920px] flex-col overflow-hidden bg-[#dfffdf] font-['Liberation_Sans',sans-serif]">
    <div className="flex h-[22px] shrink-0 items-center bg-gradient-to-b from-[#b8c8d9] to-[#d6e2ef] pl-[2px] font-['Open_Sans',sans-serif] text-[12px] tracking-[-0.24px] text-[#858e9b]">
      <Logo />
      <span className="ml-[8px] whitespace-nowrap">98-11-DEMO: HST Mandant A -- Station/Benutzer: DEVONE/el -- Do, 12.11.20 -- Elaphe Longissima 20.4 -- Softland GmbH Magdeburg</span>
      <div className="ml-auto mr-[2px] flex gap-[3px]">
        <span className="flex h-[18px] w-[31px] items-center justify-center rounded-[2px] border border-[#8a9aac]">
          <span className="h-[4px] w-[10px] border border-[#55606c] bg-white" />
        </span>
        <span className="flex h-[18px] w-[31px] items-center justify-center rounded-[2px] border border-[#8a9aac]">
          <svg width="12" height="11" viewBox="0 0 12 11"><path d="M4 .5h7.5v6h-3M.5 4.5h7.5v6H.5z" fill="#d6e2ef" stroke="#55606c" /></svg>
        </span>
        <span className="flex h-[18px] w-[31px] items-center justify-center rounded-[2px] border border-[#8a9aac]">
          <svg width="11" height="10" viewBox="0 0 11 10"><path d="M1 1l9 8M10 1L1 9" stroke="#55606c" strokeWidth="2" /></svg>
        </span>
      </div>
    </div>
    <div className="flex h-[18px] shrink-0 items-center bg-white pl-[7px] font-['Open_Sans',sans-serif] text-[12px] tracking-[-0.3px] text-[#666]">
      <span className="w-[78px]">Behandlung</span>
      <span className="w-[71px]">Datenbasis</span>
      <span className="w-[88px]">Kürzel/Muster</span>
      <span className="w-[80px]">Abrechnung</span>
      <span className="w-[55px]">Statistik</span>
      <span className="w-[64px]">Optionen</span>
      <span className="w-[60px]">Wartung</span>
      <span>Information</span>
    </div>
    <div className="relative flex-1 border-b-2 border-[#555555]">
      <div className="h-full w-[39px] border-r border-[#a8a8a8] bg-[#f0f0f0]">
        <Toolbar />
      </div>
      <MainWindow />
      <Dialog />
    </div>
  </div>
);

export default App;
